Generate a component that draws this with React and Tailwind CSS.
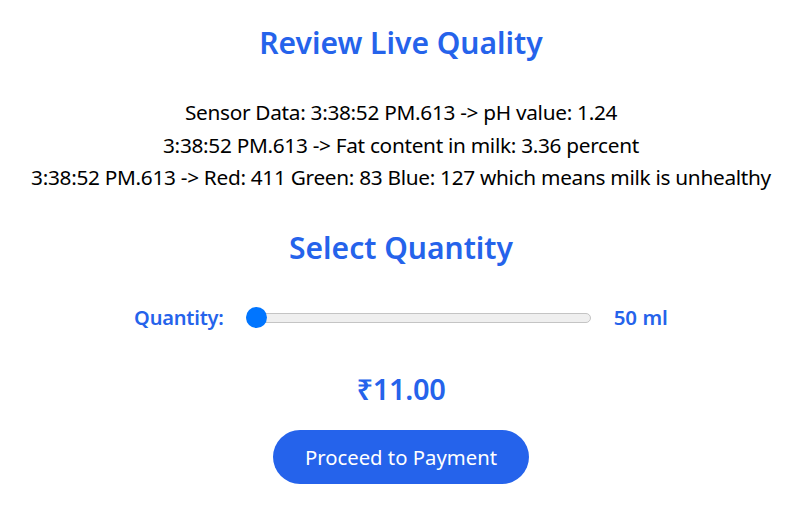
import React, { useState } from 'react';

const QualityReview = () => {
  const [quantity] = useState(50);
  const price = (quantity * 0.22).toFixed(2);

  const readings = [
    'Sensor Data: 3:38:52 PM.613 -> pH value: 1.24',
    '3:38:52 PM.613 -> Fat content in milk: 3.36 percent',
    '3:38:52 PM.613 -> Red: 411 Green: 83 Blue: 127 which means milk is unhealthy',
  ];

  return (
    <div className="min-h-screen bg-white flex flex-col items-center pt-[23px] font-['Noto_Sans',sans-serif]">
      <h1 className="text-[30px] leading-[40px] font-semibold text-[#2563eb]">Review Live Quality</h1>

      {/* Sensor readings */}
      <div className="mt-[33px] flex flex-col items-center text-[20.8px] leading-[32.5px] text-black tracking-[-0.3px]">
        {readings.map((line, i) => (
          <p key={i}>{line}</p>
        ))}
      </div>

      <h2 className="mt-[34px] text-[30px] leading-[40px] font-semibold text-[#2563eb]">Select Quantity</h2>

      {/* Quantity slider */}
      <div className="mt-[30px] flex items-center h-[40px]">
        <span className="text-[20px] font-semibold text-[#2563eb] tracking-[-0.2px]">Quantity:</span>
        <div className="relative ml-[22px] w-[345px] h-[21px] flex items-center">
          <div className="w-full h-[10px] rounded-full bg-[#efefef] border border-[#c4c4c4]" />
          <div className="absolute left-0 top-0 w-[21px] h-[21px] rounded-full bg-[#0075ff]" />
        </div>
        <span className="ml-[23px] text-[20.5px] font-semibold text-[#2563eb]">{quantity} ml</span>
      </div>

      <div className="mt-[31px] text-[29px] leading-[40px] font-semibold text-[#2563eb] tracking-[-0.3px]">₹{price}</div>

      <button className="mt-[21px] w-[256px] h-[54px] rounded-full bg-[#2563eb] text-white text-[20.3px] pt-[2px]">
        Proceed to Payment
      </button>
    </div>
  );
};

export default QualityReview;
